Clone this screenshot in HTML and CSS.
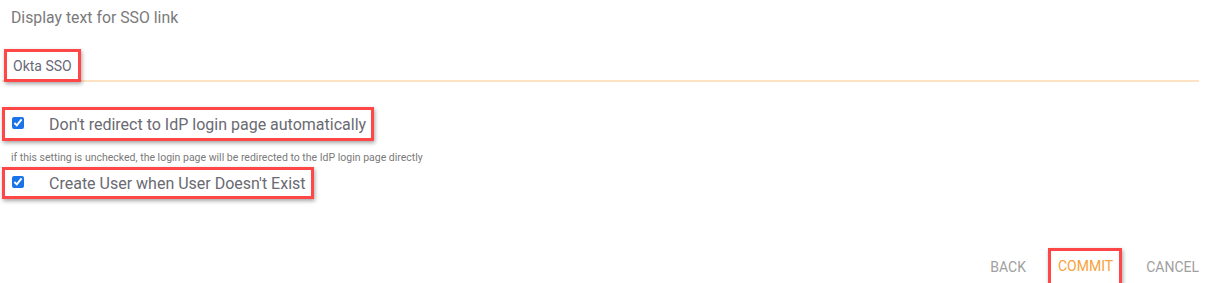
FILE: index.html
```html
<!doctype html>
<html lang="en">
    <head>
        <meta charset="utf-8">
        <title>SSO settings</title>
        <link rel="stylesheet" href="styles.css">
    </head>
    <body>
        <div class="form">
            <div class="field">
                <label class="field-label">Display text for SSO link</label>
                <div class="field-input">
                    <span class="mark mark-input">Okta SSO</span>
                </div>
            </div>

            <div class="check-row first">
                <span class="mark mark-check">
                    <input type="checkbox" checked />
                    <span class="check-text">Don't redirect to IdP login page automatically</span>
                </span>
            </div>
            <p class="hint">if this setting is unchecked, the login page will be redirected to the IdP login page directly</p>

            <div class="check-row">
                <span class="mark mark-check">
                    <input type="checkbox" checked />
                    <span class="check-text">Create User when User Doesn't Exist</span>
                </span>
            </div>

            <div class="actions">
                <span class="btn">BACK</span>
                <span class="mark mark-btn"><span class="btn primary">COMMIT</span></span>
                <span class="btn">CANCEL</span>
            </div>
        </div>
    </body>
</html>
```

FILE: styles.css
```css
/* common */
html, body { font-family: Roboto, "Liberation Sans", sans-serif; color: #666; }
body { margin: 0; background: #fff; }
p { margin: 0; }

.form { padding: 0 10px 0 2px; }

/* annotation box */
.mark {
    display: inline-flex;
    align-items: center;
    border: 3px solid #ff4747;
    box-shadow: 1px 2px 4px rgba(0, 0, 0, 0.35);
    box-sizing: border-box;
}

.field-label { display: block; font-size: 15.8px; line-height: 18px; padding: 9px 0 0 9px; color: #7a7a7a; }
.field-input {
    margin-top: 22px;
    border-bottom: 2px solid #ffe2c4;
    height: 31px;
    display: flex;
    align-items: flex-start;
}
.mark-input { height: 33px; margin-left: 2px; padding: 0 6px 0 6px; font-size: 14px; color: #686878; }

.check-row { display: flex; }
.check-row.first { margin-top: 25px; }
.mark-check { height: 34px; padding: 0 5px 2px 7px; }
.mark-check input { width: 12px; height: 12px; margin: 0; accent-color: #1a73e8; }
.check-text { margin-left: 25px; font-size: 16px; color: #6a6a72; line-height: 18px; padding-top: 4px; }

.hint { font-size: 10.5px; color: #7a7a7a; padding: 11px 0 0 9px; line-height: 12px; }
.hint + .check-row { margin-top: 3px; }
.hint + .check-row .mark-check { height: 32px; }

.actions {
    display: flex;
    justify-content: flex-end;
    align-items: center;
    margin-top: 49px;
}
.btn { font-size: 14px; color: #a0a0a0; padding: 0; }
.mark-btn { height: 38px; padding: 0 6px 2px 7px; margin: 0 24px 0 22px; }
.btn.primary { color: #f7a23b; }
```
